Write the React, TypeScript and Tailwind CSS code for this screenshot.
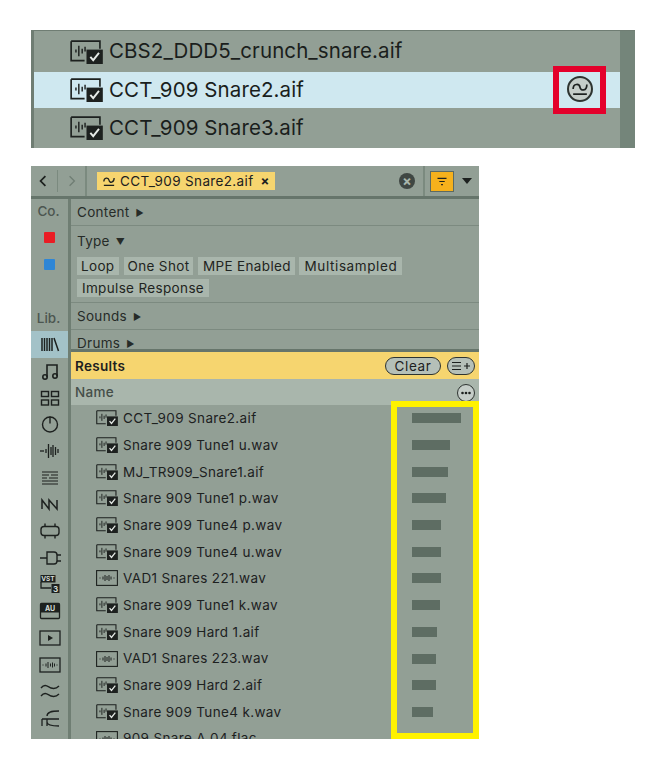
import React from 'react';

const font = { fontFamily: 'Inter, "Liberation Sans", sans-serif' };

const results = [
  { name: 'CCT_909 Snare2.aif', bar: 49, warped: true },
  { name: 'Snare 909 Tune1 u.wav', bar: 38, warped: true },
  { name: 'MJ_TR909_Snare1.aif', bar: 36, warped: true },
  { name: 'Snare 909 Tune1 p.wav', bar: 34, warped: true },
  { name: 'Snare 909 Tune4 p.wav', bar: 29, warped: true },
  { name: 'Snare 909 Tune4 u.wav', bar: 29, warped: true },
  { name: 'VAD1 Snares 221.wav', bar: 29, warped: false },
  { name: 'Snare 909 Tune1 k.wav', bar: 28, warped: true },
  { name: 'Snare 909 Hard 1.aif', bar: 25, warped: true },
  { name: 'VAD1 Snares 223.wav', bar: 24, warped: false },
  { name: 'Snare 909 Hard 2.aif', bar: 24, warped: true },
  { name: 'Snare 909 Tune4 k.wav', bar: 21, warped: true },
  { name: '909 Snare A 04.flac', bar: 0, warped: false },
];

const SampleIcon = ({ className }: { className: string }) => (
  <svg viewBox="0 0 34 25" className={className} fill="none" stroke="#1d211f">
    <path d="M1 1.200V21.500H15M1 1.200H31V9" strokeWidth="1.700" />
    <path d="M6 10v3M9 6v11M12.500 9v5M15.500 7v5" strokeWidth="1.500" />
    <rect x="17" y="10" width="17" height="15" fill="#1d211f" stroke="none" />
    <path d="M21 17.500l3 3.500 6-7.500" stroke="#e6ebe7" strokeWidth="2" />
  </svg>
);

const PlainSampleIcon = () => (
  <svg viewBox="0 0 22 16" className="h-[16px] w-[22px] shrink-0" fill="none" stroke="#1d211f">
    <rect x="0.600" y="0.600" width="20.800" height="14.800" strokeWidth="1.100" />
    <path d="M4 7.500v1M7 6.500v3M9 5v6M11 6v4M13 5v6M15 6.500v3M18 7.500v1" strokeWidth="1" />
  </svg>
);

const TildeMark = ({ className, stroke }: { className: string; stroke: string }) => (
  <svg viewBox="0 0 14 12" className={className} fill="none" stroke={stroke} strokeWidth="1.500">
    <path d="M1 6c0-5 5.500-5 6-1.500S13 8 13 2" />
    <path d="M1 10.500h12" />
  </svg>
);

const Glyph = ({ children }: { children: React.ReactNode }) => (
  <svg viewBox="0 0 22 22" className="h-[22px] w-[22px]" fill="none" stroke="#1d211f">
    {children}
  </svg>
);

const sidebarIcons: React.ReactNode[] = [
  <g key="note" strokeWidth="1.600">
    <path d="M8 17V5h10v11" />
    <circle cx="6" cy="17" r="2.200" />
    <circle cx="16" cy="16" r="2.200" />
  </g>,
  <g key="grid" strokeWidth="1.400">
    <rect x="2.500" y="4.500" width="7" height="5" />
    <rect x="12.500" y="4.500" width="7" height="5" />
    <rect x="2.500" y="13" width="7" height="5" />
    <rect x="12.500" y="13" width="7" height="5" />
  </g>,
  <g key="clock" strokeWidth="1.400">
    <circle cx="11" cy="11.500" r="7.500" />
    <path d="M11 3.500v7" />
  </g>,
  <path key="wave" d="M2 10v2M4 10v2M7 9v4M9.500 4v14M12 7v8M14 5v12M16.500 7v8M19 9v4" strokeWidth="1.300" />,
  <path key="eq" d="M3 5h16M3 8h7M12 8h7M3 11h5M10 11h9M3 14h16M3 17h16" strokeWidth="1.200" />,
  <path key="nn" d="M3 16V7l7 9V7l8 9V7" strokeWidth="1.500" />,
  <g key="capsule" strokeWidth="1.400">
    <rect x="2" y="6.500" width="18" height="9" rx="3" />
    <path d="M6 3.500v3M16 3.500v3M6 15.500v3M16 15.500v3" />
  </g>,
  <g key="plug" strokeWidth="1.400">
    <path d="M8 5h7a3 3 0 0 1 3 3v6a3 3 0 0 1-3 3H8z" />
    <path d="M1 11h7M18 8h4M18 14h4" />
  </g>,
  <g key="vst">
    <path d="M2 9v6h10" strokeWidth="1.300" />
    <rect x="1.500" y="2" width="15" height="7.500" fill="#1d211f" stroke="none" />
    <text x="9" y="8.200" textAnchor="middle" fontSize="6.500" fontWeight="700" fill="#d5dcd7" stroke="none">VST</text>
    <rect x="12.500" y="11" width="8" height="9" fill="#1d211f" stroke="none" />
    <text x="16.500" y="18.500" textAnchor="middle" fontSize="8" fontWeight="700" fill="#d5dcd7" stroke="none">3</text>
  </g>,
  <g key="au">
    <rect x="1.500" y="3.500" width="19" height="15" rx="1" strokeWidth="1.300" />
    <rect x="1.500" y="3.500" width="19" height="9" fill="#1d211f" stroke="none" />
    <text x="11" y="10.800" textAnchor="middle" fontSize="7" fontWeight="700" fill="#d5dcd7" stroke="none">AU</text>
  </g>,
  <g key="play">
    <rect x="1" y="4" width="20" height="14" strokeWidth="1.300" />
    <path d="M9 8l5 3-5 3z" fill="#1d211f" stroke="none" />
  </g>,
  <g key="boxwave">
    <rect x="1" y="4" width="20" height="14" strokeWidth="1.300" />
    <path d="M4 10.500v1M7 9.500v3M9 8v6M11.500 9.500v3M13.500 8.500v5M15.500 9.500v3M18 10.500v1" strokeWidth="1" />
  </g>,
  <path key="approx" d="M2 8c4-5 7-1 10 0s5 1 8-2M2 16c4-5 7-1 10 0s5 1 8-2" strokeWidth="1.400" />,
  <path key="tuner" d="M8 9c0-4 4-5 12-5M3 12h17M8 15c0 3 4 4 12 4M8 12v7M3 12v7" strokeWidth="1.300" />,
  <path key="last" d="M3 15h16" strokeWidth="1.400" />,
];

const SidebarRow = ({ children, active }: { children?: React.ReactNode; active?: boolean }) => (
  <div className={`flex h-[26.7px] items-center justify-center ${active ? 'bg-[#a3c2c8]' : ''}`}>{children}</div>
);

const Tag = ({ label, className = 'px-[4px] tracking-[0.35px]' }: { label: string; className?: string }) => (
  <span className={`flex h-[18px] items-center bg-[#a9b6ac] text-[13.5px] text-[#1f2421] ${className}`}>{label}</span>
);

const Section = ({ label, open, className }: { label: string; open?: boolean; className: string }) => (
  <div className={`flex items-center gap-[6px] px-[6px] text-[13.5px] tracking-[0.3px] text-[#262b28] ${className}`}>
    {label}
    <span className="text-[9px] leading-none">{open ? '▼' : '▶'}</span>
  </div>
);

export default function App() {
  return (
    <div className="min-h-[769px] bg-white pl-[31px] pt-[30px]" style={font}>
      {/* top snippet */}
      <div className="relative w-[604px] overflow-hidden border-t border-l-[3px] border-[#6f7d73] bg-[#929f95]">
        <div className="flex">
          <div className="flex-1 text-[20.5px] tracking-[0.1px] text-[#1a1e1c]">
            <div className="flex h-[41px] items-center gap-[6px] pl-[36px]">
              <SampleIcon className="h-[24px] w-[33px]" />
              CBS2_DDD5_crunch_snare.aif
            </div>
            <div className="flex h-[36px] items-center gap-[6px] bg-[#cfe8f0] pl-[36px]">
              <SampleIcon className="h-[24px] w-[33px]" />
              CCT_909 Snare2.aif
              <span className="mb-[2px] ml-auto mr-[27px] flex h-[26px] w-[26px] items-center justify-center rounded-full border-2 border-[#2e3431] bg-[#c5cdc8]">
                <TildeMark className="h-[14px] w-[16px]" stroke="#1d211f" />
              </span>
            </div>
            <div className="flex h-[40px] items-center gap-[6px] pl-[36px]">
              <SampleIcon className="h-[24px] w-[33px]" />
              CCT_909 Snare3.aif
            </div>
          </div>
          <div className="w-[15px] bg-[#74857a]" />
        </div>
        <div className="absolute left-[519px] top-[35px] h-[48px] w-[53px] border-[6px] border-[#e4002b]" />
      </div>

      {/* browser */}
      <div className="relative mt-[18px] h-[573px] w-[448px] overflow-hidden bg-[#929f95] text-[#1d211f]">
        {/* toolbar */}
        <div className="flex h-[33px] items-center border-b-[3px] border-[#66756b]">
          <div className="flex h-full w-[56px] shrink-0 items-center border-r-[2px] border-[#7b8a7f]">
            <svg viewBox="0 0 10 14" className="ml-[8px] h-[12px] w-[8px]" fill="none" stroke="#1d211f" strokeWidth="2.200">
              <path d="M8 1L2 7l6 6" />
            </svg>
            <div className="ml-[10px] h-[22px] w-px bg-[#7b8a7f]" />
            <svg viewBox="0 0 10 14" className="ml-[10px] h-[12px] w-[8px]" fill="none" stroke="#6f7d73" strokeWidth="1.600">
              <path d="M2 1l6 6-6 6" />
            </svg>
          </div>
          <div className="ml-[10px] flex h-[18px] w-[178px] items-center bg-[#f6d56f] pl-[6px] text-[13.5px] tracking-[0.35px]">
            <TildeMark className="h-[11px] w-[12px]" stroke="#1d211f" />
            <span className="ml-[5px]">CCT_909 Snare2.aif</span>
            <span className="ml-[7px] text-[13px] font-bold leading-none">×</span>
          </div>
          <div className="ml-[124px] flex h-[16px] w-[16px] items-center justify-center rounded-full bg-[#3f4743] text-[14px] font-bold leading-none text-[#a9b6ac]">×</div>
          <div className="ml-[8px] h-full w-[2px] bg-[#7b8a7f]" />
          <div className="ml-[5px] flex h-[21px] w-[24px] items-center justify-center border border-[#5d6a61] bg-[#f6b11c]">
            <svg viewBox="0 0 12 10" className="h-[9px] w-[12px]" fill="none" stroke="#1d211f" strokeWidth="1.200">
              <path d="M1 1.500h10M3 5h6M5 8.500h2" />
            </svg>
          </div>
          <svg viewBox="0 0 10 6" className="ml-[8px] h-[6px] w-[10px]" fill="#1d211f">
            <path d="M0 0h10L5 6z" />
          </svg>
        </div>

        <div className="flex">
          {/* sidebar */}
          <div className="h-[540px] w-[40px] shrink-0 overflow-hidden border-r-[3px] border-[#6f7e73] text-[#4c5650]">
            <div className="-mt-[1.5px]">
              <SidebarRow><span className="mr-[2px] mt-[1px] text-[13.5px] font-medium">Co.</span></SidebarRow>
              <SidebarRow><span className="mr-[1px] h-[11px] w-[11px] rounded-[1px] bg-[#ea1c24]" /></SidebarRow>
              <SidebarRow><span className="mr-[1px] h-[11px] w-[11px] rounded-[1px] bg-[#2e86d6]" /></SidebarRow>
              <SidebarRow />
              <SidebarRow><span className="mr-[2px] mt-[1px] text-[13.5px] font-medium">Lib.</span></SidebarRow>
              <SidebarRow active>
                <Glyph>
                  <path d="M3 5v13M5.500 5v13M8 5v13M10.500 5v13M13 5v13M15 5l4.500 13" strokeWidth="1.500" />
                </Glyph>
              </SidebarRow>
              {sidebarIcons.map((icon, i) => (
                <SidebarRow key={i}><Glyph>{icon}</Glyph></SidebarRow>
              ))}
            </div>
          </div>

          {/* main column */}
          <div className="min-w-0 flex-1">
            <Section label="Content" className="h-[27px] border-b border-[#7c8a80]" />
            <div className="h-[77px] border-b-[1.5px] border-[#7c8a80]">
              <Section label="Type" open className="h-[31px]" />
              <div className="flex flex-wrap gap-x-[5px] gap-y-[4px] px-[6px]">
                <Tag label="Loop" />
                <Tag label="One Shot" />
                <Tag label="MPE Enabled" className="w-[97px] justify-center tracking-[0.35px]" />
                <Tag label="Multisampled" className="ml-[-1px] w-[103px] justify-center tracking-[0.6px]" />
                <Tag label="Impulse Response" className="w-[132px] justify-center tracking-[0.35px]" />
              </div>
            </div>
            <Section label="Sounds" className="h-[27px] border-b border-[#7c8a80]" />
            <Section label="Drums" className="h-[22px] overflow-hidden border-b-[3px] border-[#66756b] pt-[8px]" />

            <div className="flex h-[27px] items-center bg-[#f6d56f] pl-[4px] pr-[4px] pt-[1px] text-[13.5px] font-semibold tracking-[0.3px]">
              Results
              <span className="ml-auto flex h-[18px] w-[56px] items-center justify-center rounded-full border-[1.5px] border-[#2e3431] bg-[#b5c0b8] text-[13.5px] font-normal tracking-[0.6px]">Clear</span>
              <span className="ml-[6px] flex h-[18px] w-[28px] items-center justify-center rounded-full border-[1.5px] border-[#2e3431] bg-[#b5c0b8]">
                <svg viewBox="0 0 20 10" className="h-[10px] w-[20px]" fill="none" stroke="#1d211f" strokeWidth="1.200">
                  <path d="M1 1.500h9M1 5h9M1 8.500h9M13 5h6M16 2v6" />
                </svg>
              </span>
            </div>
            <div className="flex h-[26px] items-center bg-[#a9b6ac] pl-[4px] pr-[4px] pt-[1px] text-[13.5px] font-medium tracking-[0.3px] text-[#454e49]">
              Name
              <span className="ml-auto flex h-[18px] w-[18px] items-center justify-center rounded-full border-[1.5px] border-[#2e3431] bg-[#c5cdc8]">
                <svg viewBox="0 0 10 4" className="h-[4px] w-[10px]" fill="#1d211f">
                  <circle cx="1.500" cy="2" r="1.300" />
                  <circle cx="5" cy="2" r="1.300" />
                  <circle cx="8.500" cy="2" r="1.300" />
                </svg>
              </span>
            </div>

            {results.map((row) => (
              <div key={row.name} className="flex h-[26.7px] items-center">
                <div className="flex w-[341px] shrink-0 items-center gap-[5px] pl-[25px] text-[13.5px] tracking-[0.35px] text-[#1d211f]">
                  {row.warped ? <SampleIcon className="h-[16px] w-[22px] shrink-0" /> : <PlainSampleIcon />}
                  <span className="whitespace-nowrap">{row.name}</span>
                </div>
                {row.bar > 0 && <div className="h-[10px] bg-[#5e6d63]" style={{ width: row.bar }} />}
              </div>
            ))}
          </div>
        </div>

        <div className="absolute left-[360px] top-[235px] h-[338px] w-[88px] border-[6px] border-[#fff200]" />
      </div>
    </div>
  );
}
